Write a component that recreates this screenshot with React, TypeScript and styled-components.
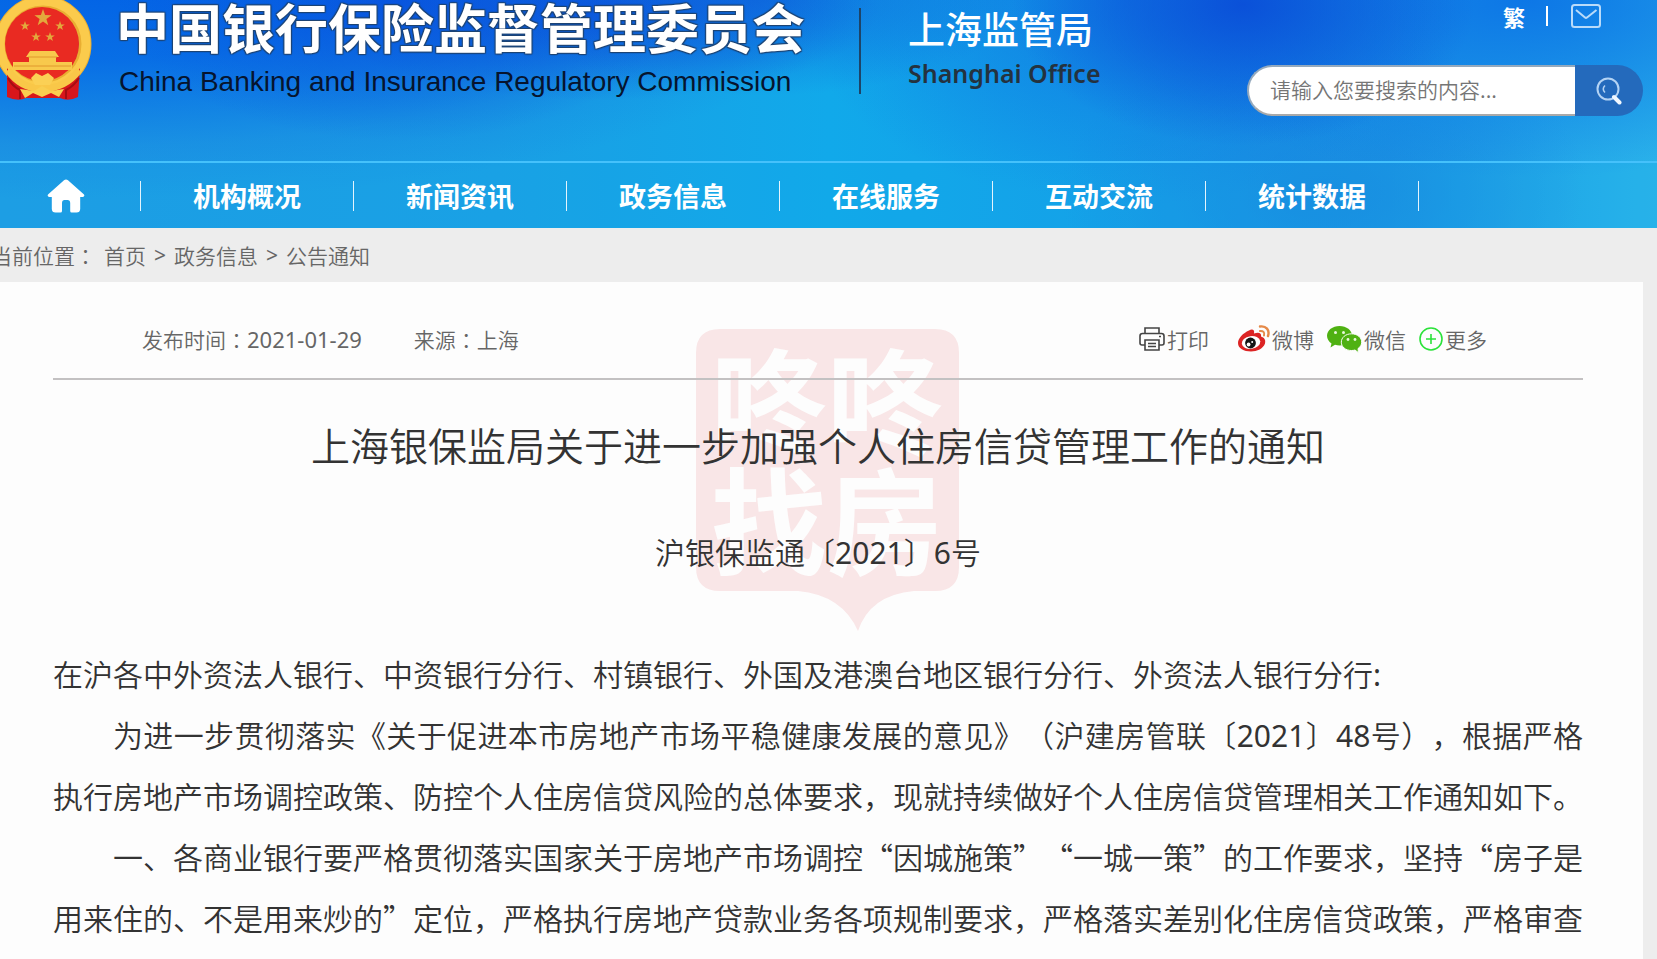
import React from "react";
import styled, { createGlobalStyle } from "styled-components";

const cjk = `"Noto Sans CJK SC", "Noto Sans", sans-serif`;

const GlobalStyle = createGlobalStyle`
  *, *::before, *::after { box-sizing: border-box; }
  body {
    margin: 0;
    background: #ededed;
    color: #333;
    font-family: ${cjk};
    text-spacing-trim: space-all;
    overflow-x: hidden;
  }
  h1, h2, p { margin: 0; font-weight: 350; }
  a { color: inherit; text-decoration: none; }
`;

const Page = styled.div`
  min-height: 100vh;
  display: flex;
  flex-direction: column;
`;

const Header = styled.header`
  background:
    radial-gradient(ellipse 17% 62% at 24% 0%, rgba(8, 76, 220, 0.7), rgba(8, 84, 224, 0)),
    radial-gradient(ellipse 17% 40% at 36% 4%, rgba(10, 80, 218, 0.8), rgba(8, 84, 224, 0)),
    radial-gradient(ellipse 16% 46% at 46% -4%, rgba(14, 96, 220, 0.75), rgba(14, 110, 226, 0)),
    radial-gradient(ellipse 46% 96% at 6% -8%, rgba(2, 98, 230, 1), rgba(4, 102, 230, 0.85) 35%, rgba(20, 128, 226, 0.4) 75%, rgba(28, 150, 226, 0)),
    radial-gradient(ellipse 14% 62% at 75% 2%, rgba(10, 78, 216, 0.95), rgba(10, 84, 220, 0)),
    radial-gradient(ellipse 20% 90% at 68% 0%, rgba(14, 110, 226, 0.7), rgba(14, 110, 226, 0)),
    radial-gradient(ellipse 26% 78% at 92% 0%, rgba(12, 116, 230, 0.95), rgba(12, 116, 230, 0)),
    radial-gradient(ellipse 16% 70% at 80% 84%, rgba(24, 130, 222, 0.75), rgba(22, 134, 224, 0)),
    linear-gradient(90deg, #1f9be3 0%, #1a9fe4 30%, #11a9ea 50%, #14a0e8 66%, #1c9ce5 84%, #2bb4ea 100%);
`;

const TopBar = styled.div`
  display: flex;
  justify-content: space-between;
  align-items: flex-start;
  height: 161px;
  padding-right: 14px;
`;

const Brand = styled.a`
  display: flex;
  align-items: flex-start;
  flex: none;
  white-space: nowrap;
`;

const BrandNames = styled.span`
  display: flex;
  flex-direction: column;
  width: 704px;
  margin-left: 24px;
`;

const BrandTitle = styled.span`
  font-size: 53px;
  line-height: 52px;
  font-weight: 700;
  color: #fff;
  text-shadow: 1px 1px 1px #1d4474, -1px -1px 1px #1d4474, 1px -1px 1px #1d4474, -1px 1px 1px #1d4474;
`;

const BrandEnglish = styled.span`
  margin-top: 14px;
  padding-left: 3px;
  font-family: "Liberation Sans", Arial, sans-serif;
  font-size: 28px;
  line-height: 32px;
  color: #06142e;
`;

const BrandRule = styled.span`
  width: 2px;
  height: 86px;
  margin: 8px 47px 0 39px;
  background: #1d4468;
`;

const Office = styled.span`
  display: flex;
  flex-direction: column;
  margin-top: 6px;
`;

const OfficeName = styled.span`
  font-size: 37px;
  line-height: 44px;
  font-weight: 500;
  color: #fff;
`;

const OfficeEnglish = styled.span`
  margin-top: 7px;
  font-family: "Noto Sans", "Open Sans", sans-serif;
  font-size: 25px;
  line-height: 32px;
  font-weight: 600;
  color: #24323f;
`;

const Tools = styled.div`
  display: flex;
  flex-direction: column;
  align-items: flex-end;
  width: 396px;
`;

const QuickLinks = styled.div`
  display: flex;
  align-items: center;
  height: 32px;
  padding-right: 42px;
  color: #fff;
  font-size: 22px;
  font-weight: 700;

  a { display: flex; align-items: center; }
`;

const QuickRule = styled.span`
  width: 2px;
  height: 20px;
  margin: 0 23px 0 21px;
  background: #fff;
`;

const SearchForm = styled.form`
  display: flex;
  width: 100%;
  height: 51px;
  margin-top: 33px;
`;

const SearchInput = styled.input`
  flex: 1;
  min-width: 0;
  padding: 0 21px 3px;
  border: 2px solid;
  border-color: #94a9bd #fff #a9a9a9 #94a9bd;
  border-right: 0;
  border-radius: 26px 0 0 26px;
  background: #fff;
  font-family: ${cjk};
  font-size: 21px;
  outline: 0;

  &::placeholder { color: #757575; opacity: 1; font-weight: 350; }
`;

const SearchButton = styled.button`
  display: flex;
  align-items: center;
  justify-content: center;
  width: 68px;
  padding: 0;
  border: 0;
  border-radius: 0 26px 26px 0;
  background: #246abc;
  cursor: pointer;
`;

const Nav = styled.nav`
  display: flex;
  align-items: center;
  height: 67px;
  border-top: 2px solid #45c1fb;
  background: rgba(24, 170, 232, 0.18);
`;

const NavLink = styled.a<{ $home?: boolean }>`
  display: flex;
  align-items: center;
  justify-content: center;
  flex: 0 1 ${(p) => (p.$home ? 141 : 213)}px;
  height: 30px;
  padding-right: ${(p) => (p.$home ? 8 : 0)}px;
  border-right: 1px solid #e4f4fd;
  color: #fff;
  font-size: 27px;
  line-height: 30px;
  font-weight: 700;
  white-space: nowrap;
`;

const Crumbs = styled.nav`
  display: flex;
  align-items: center;
  gap: 8px;
  height: 54px;
  margin-left: -9px;
  color: #666;
  font-size: 21px;
  font-weight: 350;
`;

const Article = styled.main`
  position: relative;
  flex: 1;
  margin-right: 14px;
  padding: 0 60px 8px 53px;
  background: #fdfdfd;
`;

const ArticleContent = styled.div`
  position: relative;
`;

const Meta = styled.div`
  display: flex;
  justify-content: space-between;
  align-items: flex-start;
  height: 98px;
  padding: 39px 96px 0 89px;
  border-bottom: 2px solid #c3c1c2;
  color: #666;
  font-size: 21px;
  line-height: 36px;
  font-weight: 350;
`;

const MetaGroup = styled.div<{ $gap: number }>`
  display: flex;
  gap: ${(p) => p.$gap}px;
`;

const CenteredMark = styled.span`
  font-family: "Noto Sans CJK TC", sans-serif;
  line-height: 1;
`;

const Latin = styled.span`
  font-family: "Noto Sans", "Open Sans", sans-serif;
  line-height: 1;
  font-weight: 400;
`;

const PublishDate = styled.time`
  font-family: "Noto Sans", "Open Sans", sans-serif;
  font-size: 22px;
  line-height: 1;
  font-weight: 400;
`;

const ShareLink = styled.a<{ $first?: boolean }>`
  display: flex;
  align-items: center;
  gap: 2px;
  margin-right: ${(p) => (p.$first ? 16 : 0)}px;
`;

const Title = styled.h1`
  margin-top: 34px;
  font-size: 39px;
  line-height: 60px;
  text-align: center;
`;

const DocNumber = styled.h2`
  margin-top: 47px;
  font-size: 30px;
  line-height: 60px;
  text-align: center;
`;

const Body = styled.div`
  margin-top: 62px;
  font-size: 30px;
  line-height: 61px;
  text-align: justify;
`;

const Paragraph = styled.p<{ $indent?: boolean }>`
  text-indent: ${(p) => (p.$indent ? 60 : 0)}px;
`;

const Watermark = styled.div`
  position: absolute;
  top: 47px;
  left: 50%;
  width: 263px;
  height: 302px;
  margin-left: -126px;

  svg { position: absolute; inset: 0; }
`;

const WatermarkText = styled.div`
  position: relative;
  padding-top: 8px;
  color: #fdfdfd;
  font-size: 116px;
  line-height: 119px;
  font-weight: 700;
  text-align: center;
  white-space: nowrap;
`;

const star = (cx: number, cy: number, r: number) =>
  Array.from({ length: 10 }, (_, i) => {
    const a = (Math.PI / 5) * i - Math.PI / 2;
    const d = i % 2 ? r * 0.4 : r;
    return `${(cx + d * Math.cos(a)).toFixed(1)},${(cy + d * Math.sin(a)).toFixed(1)}`;
  }).join(" ");

const Emblem = () => (
  <svg width="92" height="101" viewBox="0 0 92 101" aria-hidden="true">
    <circle cx="43" cy="44" r="42" fill="none" stroke="#e9ae32" strokeWidth="13" />
    <circle cx="43" cy="44" r="43" fill="none" stroke="#fbcb4c" strokeWidth="9" />
    <circle cx="42" cy="44" r="37" fill="#e92a22" />
    <path d="M7 68 Q16 84 32 86 L42 88 L54 86 Q70 84 80 68 L78 97 Q68 102 60 98 L26 98 Q18 102 7 97 Z" fill="#d8161b" />
    <path d="M8 70 Q20 88 42 89 Q66 88 79 70" fill="none" stroke="#f9c748" strokeWidth="7" />
    <path d="M8 78 Q12 86 20 90 L20 99 M79 78 Q74 86 66 90 L66 99" fill="none" stroke="#a50d12" strokeWidth="2" />
    {[[43, 18, 9], [25, 26, 5], [60, 26, 5], [36, 37, 5], [50, 37, 5]].map(([x, y, r]) => (
      <polygon key={`${x}-${y}`} points={star(x, y, r)} fill="#e3a83c" />
    ))}
    <path d="M30 51 H55 L59 57 H56 V62 H72 V70 H13 V62 H29 V57 H26 Z" fill="#f8c94c" />
    <path d="M28 57 H57 M14 66 H71" stroke="#e0982c" strokeWidth="1" />
    <path d="M31 78 L36 73 L42 76 L48 73 L54 78 L50 85 H35 Z" fill="#fbd055" />
    <path d="M20 89 L34 91 L42 86 L51 91 L64 89 L59 97 L51 93 L42 97 L33 93 L25 98 Z" fill="#f9ce50" />
  </svg>
);

const HomeIcon = () => (
  <svg width="38" height="34" viewBox="0 0 38 34" aria-hidden="true">
    <path
      d="M17 1.2 Q19 -.4 21 1.2 L37 15.4 Q38.200 17.600 35.600 18 H33.200 V30 Q33 33.600 29.500 33.600 H24.600 Q23.200 33.600 23.200 32 V24 Q23.200 21 20.500 21 H17.500 Q15 21 15 24 V32 Q15 33.600 13.500 33.600 H8.500 Q5 33.600 4.800 30 V18 H2.400 Q-.2 17.600 1 15.400 Z"
      fill="#fff"
    />
  </svg>
);

const MailIcon = () => (
  <svg width="30" height="24" viewBox="0 0 30 24" fill="none" stroke="#b9dbfa" strokeWidth="2" aria-hidden="true">
    <rect x="1" y="1" width="28" height="22" rx="2.500" />
    <path d="M5 6 L14 13.500 Q15 14.300 16 13.500 L25.500 6" />
  </svg>
);

const SearchIcon = () => (
  <svg width="27" height="28" viewBox="0 0 27 28" fill="none" aria-hidden="true">
    <circle cx="12" cy="12" r="10.500" stroke="#b4d3f4" strokeWidth="2" />
    <path d="M9 8.500 Q5.500 12 9 15.500" stroke="#b4d3f4" strokeWidth="1.500" />
    <path d="M18 20 L23.500 25.500" stroke="#f2f8ff" strokeWidth="4" strokeLinecap="round" />
  </svg>
);

const PrintIcon = () => (
  <svg width="26" height="24" viewBox="0 0 26 24" fill="none" stroke="#444" strokeWidth="1.600" aria-hidden="true">
    <path d="M6 7 V1 H20 V7" />
    <path d="M6 18 H3 Q1 18 1 16 V9 Q1 6.500 3.500 6.500 H22.500 Q25 6.500 25 9 V16 Q25 18 23 18 H20" />
    <path d="M6 13 H20 V23 H6 Z M9 16.500 H17 M9 19.500 H17" />
    <path d="M20 9.500 H22" />
  </svg>
);

const WeiboIcon = () => (
  <svg width="32" height="28" viewBox="0 0 32 28" aria-hidden="true">
    <path
      d="M11 5.500 C14 3.500 17 4.500 16 8.500 C20 6.800 24 7.500 23 11.500 C26 12.500 28 14.500 27 18.500 C25.500 23.500 19 26.500 13 26.500 C6 26.500 0 23.500 0 18 C0 13.500 5 8 11 5.500 Z"
      fill="#dc2424"
    />
    <ellipse cx="13" cy="17.500" rx="9.300" ry="6.400" fill="#fff" transform="rotate(-8 13 17.500)" />
    <circle cx="12.500" cy="18" r="5.400" fill="#151515" />
    <circle cx="10.600" cy="19.500" r="1.900" fill="#fff" />
    <circle cx="14.200" cy="17" r="1" fill="#fff" />
    <path d="M22 1.500 C28 .5 32 5 30 11" fill="none" stroke="#e58a4a" strokeWidth="2.400" strokeLinecap="round" />
    <path d="M22 6 C25 5.500 27 7.500 26 10.500" fill="none" stroke="#e58a4a" strokeWidth="2" strokeLinecap="round" />
  </svg>
);

const WechatIcon = () => (
  <svg width="35" height="27" viewBox="0 0 35 27" aria-hidden="true">
    <path d="M12.500 0 C5.500 0 0 4.300 0 9.800 C0 13 1.800 15.700 4.500 17.400 L3.500 21.500 L8 18.800 C9.500 19.200 11 19.400 12.500 19.400 C19.500 19.400 25 15.200 25 9.800 C25 4.300 19.500 0 12.500 0 Z" fill="#4fb112" />
    <path d="M24.500 7.800 C18.500 7.800 14.300 11.600 14.300 16.200 C14.300 20.800 18.500 24.500 24.500 24.500 C25.800 24.500 27 24.300 28 24 L31.500 26.700 L31 22.600 C33.400 21 34.700 18.700 34.700 16.200 C34.700 11.600 30.500 7.800 24.500 7.800 Z" fill="#4fb112" stroke="#fdfdfd" strokeWidth="1" />
    <g fill="#e9f7dc">
      <circle cx="8.500" cy="6.500" r="1.500" />
      <circle cx="16.500" cy="6.500" r="1.500" />
      <circle cx="21" cy="13.500" r="1.400" />
      <circle cx="28" cy="13.500" r="1.400" />
    </g>
  </svg>
);

const MoreIcon = () => (
  <svg width="24" height="24" viewBox="0 0 24 24" fill="none" stroke="#2be23a" strokeWidth="1.600" aria-hidden="true">
    <circle cx="12" cy="12" r="11" />
    <path d="M12 7 V17 M7 12 H17" />
  </svg>
);

const Colon = () => <CenteredMark lang="zh-TW">：</CenteredMark>;

const sections = ["机构概况", "新闻资讯", "政务信息", "在线服务", "互动交流", "统计数据"];

export default function App() {
  return (
    <Page lang="zh-CN">
      <GlobalStyle />
      <Header>
        <TopBar>
          <Brand href="#">
            <Emblem />
            <BrandNames>
              <BrandTitle>中国银行保险监督管理委员会</BrandTitle>
              <BrandEnglish>China Banking and Insurance Regulatory Commission</BrandEnglish>
            </BrandNames>
            <BrandRule />
            <Office>
              <OfficeName>上海监管局</OfficeName>
              <OfficeEnglish>Shanghai Office</OfficeEnglish>
            </Office>
          </Brand>
          <Tools>
            <QuickLinks>
              <a href="#">繁</a>
              <QuickRule />
              <a href="#" aria-label="邮箱"><MailIcon /></a>
            </QuickLinks>
            <SearchForm role="search" onSubmit={(e) => e.preventDefault()}>
              <SearchInput type="text" aria-label="搜索" placeholder="请输入您要搜索的内容..." />
              <SearchButton type="submit" aria-label="搜索"><SearchIcon /></SearchButton>
            </SearchForm>
          </Tools>
        </TopBar>
        <Nav>
          <NavLink $home href="#" aria-label="首页"><HomeIcon /></NavLink>
          {sections.map((s) => (
            <NavLink key={s} href="#">{s}</NavLink>
          ))}
        </Nav>
      </Header>

      <Crumbs aria-label="当前位置">
        <span>当前位置<Colon /></span>
        <a href="#">首页</a>
        <Latin>&gt;</Latin>
        <a href="#">政务信息</a>
        <Latin>&gt;</Latin>
        <a href="#">公告通知</a>
      </Crumbs>

      <Article>
        <Watermark aria-hidden="true">
          <svg width="263" height="302" viewBox="0 0 263 302">
            <path
              d="M24 0 H239 Q263 0 263 24 V238 Q263 262 239 262 H218 Q174 266 162 302 Q146 266 102 262 H24 Q0 262 0 238 V24 Q0 0 24 0 Z"
              fill="#f9e6e7"
            />
          </svg>
          <WatermarkText>咚咚<br />找房</WatermarkText>
        </Watermark>
        <ArticleContent>
          <Meta>
            <MetaGroup $gap={52}>
              <span>发布时间<Colon /><PublishDate>2021-01-29</PublishDate></span>
              <span>来源<Colon />上海</span>
            </MetaGroup>
            <MetaGroup $gap={13}>
              <ShareLink $first href="#"><PrintIcon />打印</ShareLink>
              <ShareLink href="#"><WeiboIcon />微博</ShareLink>
              <ShareLink href="#"><WechatIcon />微信</ShareLink>
              <ShareLink href="#"><MoreIcon />更多</ShareLink>
            </MetaGroup>
          </Meta>
          <Title>上海银保监局关于进一步加强个人住房信贷管理工作的通知</Title>
          <DocNumber>沪银保监通〔<Latin>2021</Latin>〕<Latin>6</Latin>号</DocNumber>
          <Body>
            <Paragraph>在沪各中外资法人银行、中资银行分行、村镇银行、外国及港澳台地区银行分行、外资法人银行分行<Latin>:</Latin></Paragraph>
            <Paragraph $indent>
              为进一步贯彻落实《关于促进本市房地产市场平稳健康发展的意见》（沪建房管联〔<Latin>2021</Latin>〕<Latin>48</Latin>号），根据严格执行房地产市场调控政策、防控个人住房信贷风险的总体要求，现就持续做好个人住房信贷管理相关工作通知如下。
            </Paragraph>
            <Paragraph $indent>
              一、各商业银行要严格贯彻落实国家关于房地产市场调控“因城施策”“一城一策”的工作要求，坚持“房子是用来住的、不是用来炒的”定位，严格执行房地产贷款业务各项规制要求，严格落实差别化住房信贷政策，严格审查
            </Paragraph>
          </Body>
        </ArticleContent>
      </Article>
    </Page>
  );
}
